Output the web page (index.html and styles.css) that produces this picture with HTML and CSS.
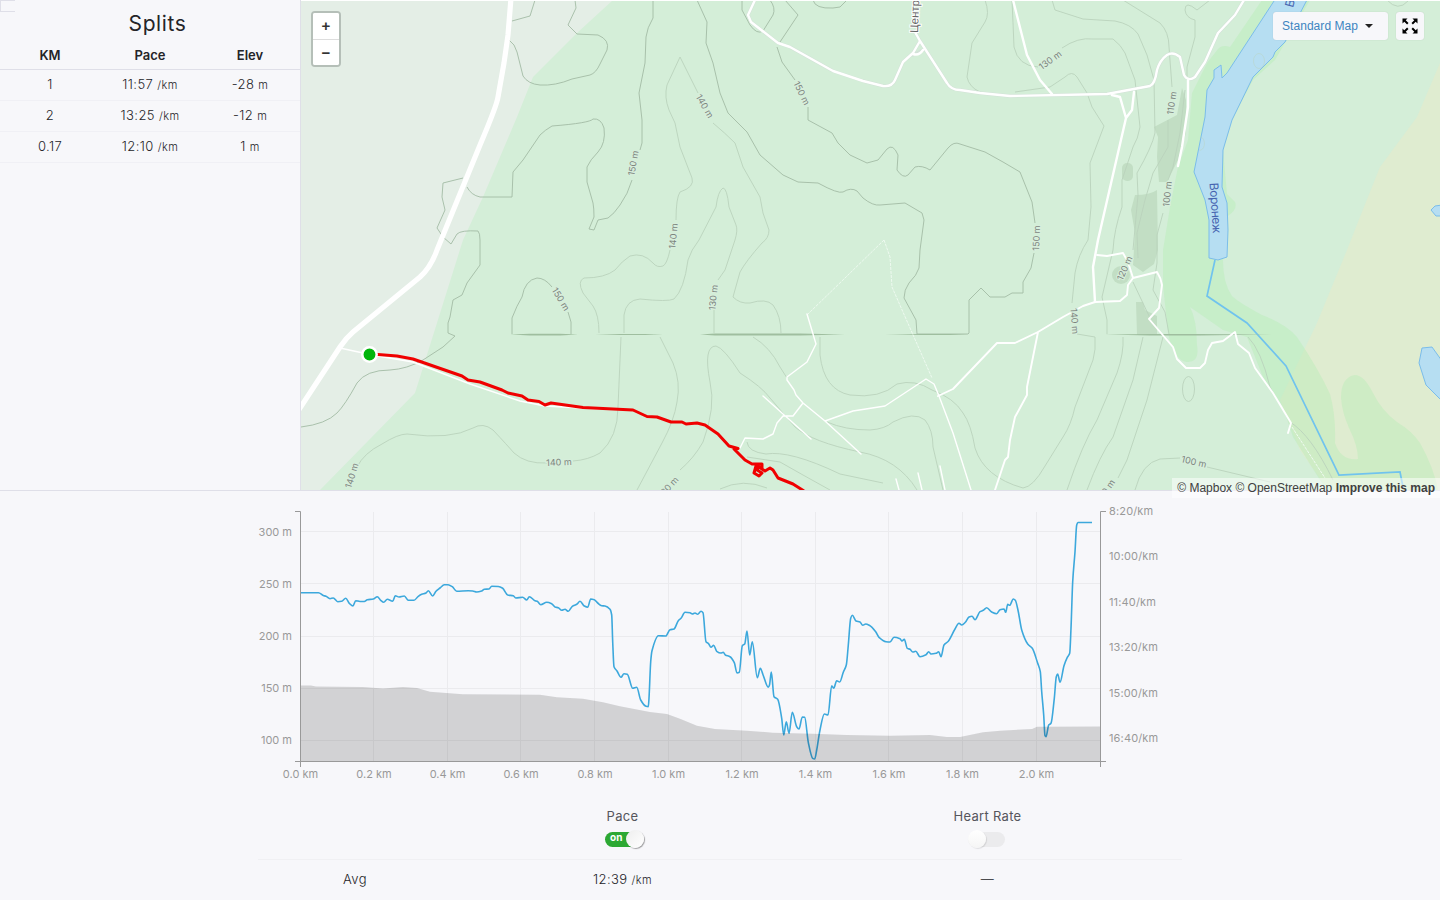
FILE: index.html
```html
<!DOCTYPE html>
<html lang="en">
<head>
    <meta charset="UTF-8">
    <title>Splits</title>
    <link rel="stylesheet" href="styles.css">
</head>
<body>
<div class="overview">
    <div class="splits">
        <span class="splits-handle"></span>
        <h2>Splits</h2>
        <table class="splits-table">
            <thead>
            <tr><th>KM</th><th>Pace</th><th>Elev</th></tr>
            </thead>
            <tbody>
            <tr><td>1</td><td>11:57 <small>/km</small></td><td>-28 <small>m</small></td></tr>
            <tr><td>2</td><td>13:25 <small>/km</small></td><td>-12 <small>m</small></td></tr>
            <tr><td>0.17</td><td>12:10 <small>/km</small></td><td>1 <small>m</small></td></tr>
            </tbody>
        </table>
    </div>
    <div class="map">
        <svg class="map-canvas" width="1139" height="489" viewBox="301 1 1139 489">
            <!-- land -->
            <rect x="301" y="1" width="1139" height="489" fill="#e4eee6"/>
            <path class="forest" d="M613 0L577 33 533 77 517 117 483 197 463 240 415 393 320 490H1440V0z"/>
            <path class="meadow" d="M1440 63L1417 117 1380 167 1360 217 1347 250 1317 323 1280 400 1300 450 1328 490H1440z"/>
            <path class="bank" d="M1262 0L1230 47Q1222 44 1218 49L1207 63 1192 93 1188 140 1178 167 1170 207 1163 250V285L1168 333Q1174 361 1187 362T1197 345Q1197 320 1190 307L1223 330 1247 337 1263 377 1283 407 1293 437 1320 480 1327 490H1438Q1434 468 1420 443 1412 431 1397 422 1382 411 1373 393 1364 375 1355 375 1341 377 1341 398 1342 412 1349 428 1358 446 1358 459 1341 461 1335 443 1336 415 1330 394 1318 368 1297 337 1286 324 1262 315 1238 302 1232 296 1223 283 1223 260L1228 216Q1238 209 1235 202L1227 194 1223 150 1232 120 1253 80 1275 60 1310 0z"/>
            <g class="wood">
                <path d="M1182 88L1186 100V133L1178 160 1167 182H1159L1157 157 1158 137 1154 127 1177 115z"/>
                <path d="M1135 195Q1150 195 1157 190L1158 250 1154 264 1143 272 1133 265 1135 233 1131 210z"/>
                <path d="M1136 302H1143L1145 310 1157 316V335H1137z"/>
                <rect x="1122" y="163" width="11" height="18" rx="5"/>
                <ellipse cx="1121" cy="275" rx="9" ry="9"/>
            </g>
            <!-- water -->
            <g class="water">
                <path d="M1276 -2L1227 73 1222 78 1221 65 1214 70V78L1207 90 1205 117 1194 172 1205 200 1209 220V258L1218 260 1227 257 1228 230 1227 203 1222 187 1223 150 1232 120 1253 77 1273 57 1275 52 1285 42 1308 -2z"/>
                <path d="M1442 205L1435 206 1431 210 1436 216H1442z"/>
                <path d="M1422 348L1432 347 1442 361V401L1426 385 1419 363z"/>
            </g>
            <path class="stream" d="M1215 260L1207 296 1247 323 1286 366 1339 475 1400 472 1403 487"/>
            <!-- contour lines -->
            <g class="contour contour-major">
                <path d="M535 0L530 16 512 21M509 40Q515 44 517 52L523 76Q528 84 540 85 555 86 572 79L590 75Q596 73 600 64L607 50Q610 40 598 35L577 34 568 25 576 8 575 0"/>
                <path d="M653 0V18Q647 28 646 37L645 63 639 93 642 120V143L640 150M632 180Q628 194 620 205 614 214 608 218L598 220 594 230 589 229 594 217Q594 208 593 203L587 182V167Q590 160 598 152 606 143 604 128 601 118 593 119 590 123 552 126 545 130 540 135L523 160 513 172 512 197H480Q471 195 467 187M463 178L443 183 442 197 445 210 437 228Q442 238 451 244L457 234Q461 230 478 231 480 233 480 240V265L467 283 462 295 453 300 450 317 448 323V333L455 336 443 347 423 360Q407 369 390 370 366 370 357 383 345 405 337 413 326 424 301 427"/>
                <path d="M697 0L707 22 706 43 713 63 720 93 728 113 747 132 760 155 783 175 798 182 818 183Q838 194 843 192 851 187 857 191L863 198Q873 206 880 205L905 203 922 213 924 220 920 250 919 268Q917 275 909 283 904 290 904 298L916 320 917 334H968L969 333V300L981 288 990 297H1005L1012 293H1023V282L1031 268 1034 253M1035 223L1032 202 1020 172 1003 162 985 152 960 144Q954 141 948 148L930 170Q922 165 915 167L908 175Q903 179 897 170L898 155Q893 143 887 149L878 160 867 163 850 155 838 143 832 133 808 120 808 107M795 80L782 62 777 47M785 0L798 15 780 42M742 0V10L750 25Q757 35 763 31L773 15Q776 8 770 0M813 0Q815 9 833 8L840 7 847 0"/>
                <path d="M512 334V318Q517 305 522 297 525 280 537 278 545 278 552 287M568 312L571 322V334"/>
            </g>
            <g class="contour">
                <path d="M698 93L680 57 667 85Q664 97 669 110L675 123 680 147 692 178Q695 187 680 192 676 198 676 220M670 250Q667 264 663 266 657 268 653 263 643 252 630 256 622 261 615 270 605 278 584 278 577 281 583 293L593 306Q599 315 599 333M713 123Q725 133 735 143L743 167 760 197 763 213 769 230Q769 238 762 243 746 261 740 272L733 297Q740 304 750 303 766 298 773 305 781 316 781 333"/>
                <path d="M735 240Q738 230 736 225L729 207Q727 188 723 188 718 191 716 207L699 240Q691 250 688 260 684 290 674 299 668 302 640 299 626 300 624 315V333M735 240L725 270 718 280M714 310V333"/>
                <path d="M621 337L618 407Q618 437 600 453 588 460 573 461M547 463Q526 464 514 453 508 446 493 430 483 422 473 428 450 440 407 434 398 434 382 444 364 453 357 467M660 337L673 363Q681 382 677 402 674 421 662 443L637 490M753 337Q770 347 780 367L787 378M680 470Q694 458 703 442 716 407 710 382 703 346 716 346 724 348 740 373 762 387 770 398L795 427Q812 442 860 452 898 459 917 490M747 442Q748 452 766 454 790 450 840 474L883 483M747 457L780 462 803 475 830 490M720 489Q743 478 767 488"/>
                <path d="M820 337V355Q824 390 850 395 880 399 897 384 915 379 932 390 954 398 963 413 971 424 975 448 984 477 1023 488 1033 487 1045 466L1063 437Q1071 425 1075 407L1093 360Q1096 350 1095 337L1077 334M827 422Q845 430 870 430 885 429 893 422 914 411 925 420 933 430 933 447L943 490"/>
                <path d="M1123 337Q1124 353 1117 373L1097 420Q1082 445 1067 490M1143 337L1133 380 1113 437Q1100 455 1087 490M1163 337L1147 400 1127 460 1118 478M1135 490Q1142 463 1160 459L1180 458M1207 467L1270 482M1248 337Q1261 350 1270 387L1290 422Q1311 435 1333 480"/>
                <path d="M985 0Q990 14 985 22L972 43 967 77Q969 87 980 92M1012 0Q1013 22 1014 47 1018 66 1038 67M1062 48Q1078 37 1093 39H1113Q1121 45 1125 53L1135 80 1140 127Q1138 139 1133 147L1122 180V207Q1114 230 1113 250L1102 297 1107 320V334M1015 92L1050 87 1065 77Q1072 70 1077 77L1087 93 1092 107 1104 126 1090 163 1091 207 1088 240Q1078 255 1075 273L1072 303M1052 0L1055 10 1083 19 1115 21Q1131 24 1138 34L1147 55 1154 80 1155 133Q1152 147 1137 173L1138 195 1133 250M1123 0L1160 23Q1169 32 1169 47L1172 87M1168 120V147L1153 173 1145 200 1137 233 1138 258M1210 0L1197 10Q1185 0 1185 10 1186 18 1195 20L1195 37 1187 67V80"/>
                <path d="M1185 90L1180 133 1173 167 1168 180M1163 213L1157 235V263L1153 290 1165 312 1169 334M1387 0Q1398 12 1408 1M1133 282L1150 318"/>
                <ellipse cx="1188.500" cy="389" rx="6" ry="12.500"/>
                <ellipse cx="1259" cy="61" rx="5.500" ry="7.500" opacity=".5"/>
                <path d="M1201 137A4 6 0 0 1 1199 150" opacity=".5"/>
            </g>
            <g class="seam">
                <path d="M510 334.500L530 333.700H560L578 334.500 560 335.500H530zM595 334.500L620 334H645L663 334.500 645 335H620zM700 334.500L715 333.500H800L845 334.500 800 335.600H715zM885 334.500L920 334H950L968 334.500 950 335H920zM1105 334.400L1150 334H1200L1278 334.500 1200 335.500H1150z"/>
            </g>
            <!-- roads -->
            <g class="road-path">
                <path d="M884 240L808 314M884 240L890 257 892 287 932 378M1292 427L1325 478"/>
            </g>
            <g class="road-case">
                <path d="M755 0L748 15 751 22 778 43 790 47 833 71 863 81 883 86Q892 87 895 80L903 62 913 53 920 41 915 32M923 50L913 55M920 41L947 83Q951 90 960 90L980 93 1010 96 1107 94 1150 86Q1155 84 1157 70 1160 60 1167 55 1173 51 1180 57L1184 75Q1188 82 1195 77L1205 62 1218 33 1235 15 1244 0"/>
            </g>
            <g class="road">
                <path class="road-wide" d="M511 -2L508 35 504 63 498 97Q497 105 480 145L437 250Q431 267 420 277L353 332Q346 338 340 347L298 411"/>
                <path class="road-mid" d="M755 0L748 15 751 22 778 43 790 47 833 71 863 81 883 86Q892 87 895 80L903 62 913 53 920 41 915 32M923 50Q919 56 913 54M920 41L947 83Q951 90 960 90L980 93 1010 96 1107 94 1150 86Q1155 84 1157 70 1160 60 1167 55 1173 51 1180 57L1184 75Q1188 82 1195 77L1205 62 1218 33 1235 15 1244 0M1013 0L1027 55 1040 80 1052 94M1188 80V107L1182 147 1178 166M1112 95L1120 97 1126 118 1132 110 1134 92M1126 118L1098 240 1093 267 1095 302"/>
                <path d="M1097 255L1107 256 1123 253 1128 262 1133 278 1128 285 1127 295 1120 301 1095 302 1083 306 1063 317 1038 332 1015 343H997L953 389 938 396M1038 332L1027 387V395L1015 417 1010 440 1008 457 1005 460 995 490M1133 278L1157 272Q1161 278 1162 285L1159 308 1149 319 1173 347 1177 359 1186 368H1200L1205 363 1208 350 1212 343 1223 341 1235 332 1238 344 1249 353 1255 368 1273 393 1291 423 1288 433"/>
                <path class="road-thin" d="M807 314L816 344 807 362 787 377V380L794 390 796 395 803 403 825 421 861 454M825 421L853 411 885 406 926 379 934 384 939 396 953 433 971 490M763 396L811 439M803 403L793 416H783L777 423 773 434 763 439 745 438 740 448M896 479L899 490M918 473L922 490M940 466L945 490M340 348L363 353M372 355L413 362 470 384 520 401 545 406 600 409"/>
            </g>
            <!-- labels -->
            <g class="contour-label">
                <text transform="translate(633 163) rotate(-80)" y="3.500">150 m</text>
                <text transform="translate(705 106) rotate(60)" y="3.500">140 m</text>
                <text transform="translate(802 93) rotate(64)" y="3.500">150 m</text>
                <text transform="translate(673 236) rotate(-85)" y="3.500">140 m</text>
                <text transform="translate(713 297.500) rotate(-84)" y="3.500">130 m</text>
                <text transform="translate(561 299) rotate(59)" y="3.500">150 m</text>
                <text transform="translate(559 462) rotate(-2)" y="3.500">140 m</text>
                <text transform="translate(351.500 475.500) rotate(-73)" y="3.500">140 m</text>
                <text transform="translate(668 487) rotate(-47)" y="3.500">130 m</text>
                <text transform="translate(1036 238) rotate(-88)" y="3.500">150 m</text>
                <text transform="translate(1075 321) rotate(86)" y="3.500">140 m</text>
                <text transform="translate(1124.500 268) rotate(-66)" y="3.500">120 m</text>
                <text transform="translate(1050 60) rotate(-36)" y="3.500">130 m</text>
                <text transform="translate(1171.500 103) rotate(-82)" y="3.500">110 m</text>
                <text transform="translate(1167 194) rotate(-84)" y="3.500">100 m</text>
                <text transform="translate(1194 461.500) rotate(13)" y="3.500">100 m</text>
                <text transform="translate(1106 490) rotate(-55)" y="3.500">110 m</text>
                <text transform="translate(871 499) rotate(-45)" y="3.500">130 m</text>
            </g>
            <text class="street-label" transform="translate(918 33) rotate(-88)">Центр</text>
            <text class="river-label" transform="translate(1209.500 183) rotate(86)">Воронеж</text>
            <text class="river-label" transform="translate(1293 8) rotate(-75)">В</text>
            <!-- activity track -->
            <path class="track" d="M373 354.300L378 354.500 397 356 413 359 462 376 468 380 480 382 502 390 508 393 522 396 528 400 539 401.500 545 405 551 403 583 407.500 633 410 647 416.500 657 417 671 422H682L686 424 697 423 705 425 718 434 729 446 738 448.500 734 449 745 460 752 464 762 464 762 468 756 466 754 473 759 476 762 473 757 470 759 467 765 471 770 468 773 470 778 478 793 484 804 491"/>
            <circle cx="369.500" cy="354.500" r="7.200" fill="#00b50b" stroke="#fff" stroke-width="2.500"/>
        </svg>
        <div class="map-zoom">
            <button type="button">+</button>
            <button type="button">−</button>
        </div>
        <div class="map-tools">
            <div class="map-style">Standard Map <span class="caret"></span></div>
            <div class="map-full">
                <svg width="16" height="16" viewBox="0 0 16 16">
                    <path class="arrow-arm" d="M2 2L5.800 5.800M14 2L10.200 5.800M2 14L5.800 10.200M14 14L10.200 10.200"/>
                    <path d="M.5.500H5.500L.5 5.500zM15.500.500H10.500L15.500 5.500zM.5 15.500H5.500L.5 10.500zM15.500 15.500H10.500L15.500 10.500z"/>
                </svg>
            </div>
        </div>
        <div class="map-credit">© Mapbox © OpenStreetMap <b>Improve this map</b></div>
    </div>
</div>

<div class="analysis">
    <svg class="chart" width="924" height="290" viewBox="258 500 924 290">
        <path class="chart-grid" d="M301 531.500H1100M301 583.500H1100M301 636.500H1100M301 688.500H1100M301 740.500H1100M373.500 512V761M447.500 512V761M520.500 512V761M594.500 512V761M668.500 512V761M741.500 512V761M815.500 512V761M888.500 512V761M962.500 512V761M1036.500 512V761"/>
        <path class="chart-pace" id="pace"/>
        <path class="chart-elev" d="M301 761V685.500H311L316 686.600 363 687 383 688.600 403 687 417 688 430 691.700 463 694.300 540 694.700 557 697.300 583 698.700 603 702.300 620 706.300 650 712 667 714 680 718.700 697 725.700 715 729 747 730.700 773 732.700 813 733.700 847 735 890 735.700 930 735 947 737H960L983 732.300 1000 730.700 1032 729 1037 726.700 1100 726.500V761z"/>
        <path class="chart-axis" d="M295 511.500H300.500V767M295 761.500H1106M1100.500 767V511.500H1106"/>
        <g class="chart-text chart-left">
            <text x="292" y="536">300 m</text>
            <text x="292" y="588">250 m</text>
            <text x="292" y="640">200 m</text>
            <text x="292" y="692">150 m</text>
            <text x="292" y="744">100 m</text>
        </g>
        <g class="chart-text chart-right">
            <text x="1109" y="515">8:20/km</text>
            <text x="1109" y="560">10:00/km</text>
            <text x="1109" y="606">11:40/km</text>
            <text x="1109" y="651">13:20/km</text>
            <text x="1109" y="697">15:00/km</text>
            <text x="1109" y="742">16:40/km</text>
        </g>
        <g class="chart-text chart-bottom">
            <text x="300.500" y="778">0.0 km</text>
            <text x="374" y="778">0.2 km</text>
            <text x="447.500" y="778">0.4 km</text>
            <text x="521" y="778">0.6 km</text>
            <text x="595" y="778">0.8 km</text>
            <text x="668.500" y="778">1.0 km</text>
            <text x="742" y="778">1.2 km</text>
            <text x="815.500" y="778">1.4 km</text>
            <text x="889" y="778">1.6 km</text>
            <text x="962.500" y="778">1.8 km</text>
            <text x="1036.500" y="778">2.0 km</text>
        </g>
    </svg>
    <div class="stats">
        <div class="stats-row stats-head">
            <div></div>
            <div>Pace<span class="toggle toggle-on"><i>on</i></span></div>
            <div>Heart Rate<span class="toggle"></span></div>
        </div>
        <div class="stats-row">
            <div>Avg</div>
            <div>12:39 <small>/km</small></div>
            <div>—</div>
        </div>
    </div>
</div>
<script src="chart.js"></script>
</body>
</html>
```
FILE: styles.css
```css
* {
    box-sizing: border-box;
}
body {
    margin: 0;
    height: 900px;
    overflow: hidden;
    background: #f7f7fa;
    color: #242428;
    font-family: Inter, "Liberation Sans", sans-serif;
    font-size: 13px;
}
small {
    font-size: 11px;
}
.overview {
    display: flex;
    height: 491px;
    border-bottom: 1px solid #dfdfe8;
}
.splits {
    position: relative;
    width: 301px;
    border-right: 1px solid #dfdfe8;
}
.splits-handle {
    position: absolute;
    top: 0;
    left: 0;
    width: 15px;
    height: 12px;
    border: 1px solid #dfdfe8;
    border-right: 0;
}
.splits h2 {
    margin: 0;
    padding: 9px 0 0 15px;
    height: 41px;
    font-size: 21px;
    line-height: 30px;
    font-weight: 400;
    letter-spacing: 0.6px;
    text-align: center;
}
.splits-table {
    width: 300px;
    table-layout: fixed;
    border-collapse: separate;
    border-spacing: 0;
    text-align: center;
}
.splits-table th {
    height: 29px;
    padding: 0;
    font-weight: 600;
    border-bottom: 1px solid #dfdfe8;
}
.splits-table td {
    height: 31px;
    padding: 0 0 2px;
    font-weight: 300;
    letter-spacing: 0.4px;
    border-bottom: 1px solid #f0f0f5;
}

/* map */
.map {
    position: relative;
    flex: 1;
    padding-top: 1px;
    background: #fff;
    font-family: "Liberation Sans", Arial, sans-serif;
}
.map-canvas {
    display: block;
}
.forest {
    fill: #d4eed8;
}
.meadow {
    fill: #dfecd0;
}
.bank {
    fill: rgba(180, 238, 180, 0.4);
}
.wood {
    fill: #c2dec4;
}
.water {
    fill: #b6def2;
    stroke: #7bbdea;
}
.stream {
    fill: none;
    stroke: #70c3ee;
    stroke-width: 1.7;
}
.contour {
    fill: none;
    stroke: #bad2bc;
    stroke-width: 0.9;
}
.contour-major {
    stroke: #a3bba5;
}
.seam {
    fill: #9fbe9f;
}
.road,
.road-case {
    fill: none;
    stroke: #fff;
    stroke-width: 1.9;
    stroke-linejoin: round;
    stroke-linecap: round;
}
.road-case {
    stroke: #d3e2d8;
    stroke-width: 3.4;
}
.road-wide {
    stroke-width: 5.2;
}
.road-mid {
    stroke-width: 2.4;
}
.road-thin {
    stroke-width: 1.4;
}
.road-path {
    fill: none;
    stroke: #eefaf0;
    stroke-dasharray: 3 1;
}
.contour-label {
    font-family: Inter, "Liberation Sans", sans-serif;
    font-size: 9px;
    fill: #7c857e;
    stroke: #d8eedc;
    stroke-width: 2px;
    paint-order: stroke;
    text-anchor: middle;
}
.street-label {
    font-size: 11.5px;
    fill: #666;
    stroke: #fff;
    stroke-width: 2px;
    paint-order: stroke;
}
.river-label {
    font-family: Inter, "Liberation Sans", sans-serif;
    font-size: 12px;
    letter-spacing: -0.4px;
    fill: #4664b0;
}
.track {
    fill: none;
    stroke: #f00000;
    stroke-width: 3;
    stroke-linejoin: round;
}
.map-zoom {
    position: absolute;
    top: 11px;
    left: 10px;
    display: flex;
    flex-direction: column;
    width: 30px;
    border: 2px solid #b5bfb8;
    border-radius: 4px;
    background: #fff;
    overflow: hidden;
}
.map-zoom button {
    height: 26px;
    padding: 0;
    border: 0;
    background: #fff;
    color: #333;
    font: bold 15px/26px "Liberation Sans", Arial, sans-serif;
}
.map-zoom button + button {
    border-top: 1px solid #ddd;
    line-height: 24px;
}
.map-tools {
    position: absolute;
    top: 12px;
    right: 16px;
    display: flex;
    gap: 8px;
}
.map-style,
.map-full {
    display: flex;
    align-items: center;
    height: 28px;
    background: #f7f7fa;
    border-radius: 3px;
    box-shadow: 0 0 1px rgba(0, 0, 0, 0.2);
}
.map-style {
    width: 115px;
    padding-left: 9px;
    color: #3d85c0;
    font-size: 12px;
    letter-spacing: 0.05px;
}
.caret {
    margin-left: 7px;
    border: 4px solid transparent;
    border-top-color: #222;
    border-bottom: 0;
}
.map-full {
    width: 28px;
    justify-content: center;
}
.arrow-arm {
    stroke: #000;
    stroke-width: 2;
}
.map-credit {
    position: absolute;
    right: 0;
    bottom: -8px;
    height: 20px;
    padding: 0 5px;
    background: rgba(255, 255, 255, 0.5);
    color: #404040;
    font-size: 12px;
    line-height: 20px;
    white-space: nowrap;
}

/* elevation / pace chart */
.analysis {
    width: 924px;
    margin: 0 auto;
    padding-top: 9px;
}
.chart {
    display: block;
}
.chart-grid {
    fill: none;
    stroke: #ebebee;
}
.chart-pace {
    fill: none;
    stroke: #3ca8dc;
    stroke-width: 1.6;
    stroke-linejoin: round;
}
.chart-elev {
    fill: rgba(0, 0, 0, 0.15);
}
.chart-axis {
    fill: none;
    stroke: #999;
}
.chart-text {
    font-size: 11px;
    fill: #999;
}
.chart-right {
    letter-spacing: 0.15px;
}
.chart-left {
    text-anchor: end;
}
.chart-bottom {
    text-anchor: middle;
}

/* averages */
.stats-row {
    display: grid;
    grid-template-columns: 194px 341px 389px;
    height: 40px;
    line-height: 38px;
    text-align: center;
    font-weight: 300;
    letter-spacing: 0.4px;
}
.stats-head {
    height: 70px;
    padding-top: 17px;
    line-height: 19px;
    font-weight: 400;
    letter-spacing: 0.3px;
    color: #55555c;
    border-bottom: 1px solid #f0f0f3;
}
.toggle {
    position: relative;
    display: block;
    width: 37px;
    height: 15px;
    margin: 6px auto 0 175px;
    border-radius: 8px;
    background: #ebebed;
}
.toggle::after {
    content: '';
    position: absolute;
    top: -2px;
    left: 0;
    width: 18px;
    height: 18px;
    border-radius: 50%;
    background: linear-gradient(#fff, #f5f5f5);
    box-shadow: 1px 1px 1px rgba(0, 0, 0, 0.1);
}
.toggle-on {
    width: 38px;
    margin-left: 153px;
    background: #2ca833;
}
.toggle-on::after {
    left: 21px;
    background: linear-gradient(135deg, #eee, #fff);
    box-shadow: 1px 1px 1px rgba(0, 0, 0, 0.35);
}
.toggle i {
    position: absolute;
    top: 0;
    left: 5px;
    color: #fff;
    font-style: normal;
    font-weight: 700;
    font-size: 10px;
    line-height: 11px;
    letter-spacing: 0;
}
```
FILE: chart.js
```js
// x y pairs of the pace line, in chart units
var pace = "301 592.7 318.5 592.7 323.3 595.5 326 596.3 330 598.7 333.3 598 337.7 601.7 341.7 601.3 345.7 598.3 349.3 603.3 353 606 355.7 600.7 360 601.5 364.3 601.5 367.3 599.7 373.3 599 377.3 596.7 380.7 600.3 383.7 602.3 387.3 599.3 392.7 601.3 395.3 595.7 399 597 404.3 596 408.3 600.3 414 600.3 418.3 596.3 421.7 594.3 426 593 428.3 590.7 432.7 596 436 591.3 440 588 444.3 584.7 448 584.7 452.3 586.7 456.7 591.3 468.3 590.7 472.7 591 476.7 592 481.7 591 484.3 589.3 489 589 491.7 586.3 498.3 586.5 502.7 588.3 507.7 595 513.3 595.7 515.7 598 522.7 597.3 526.7 600 529.3 596.7 535 600.7 537.3 601.3 540.7 604.7 546.7 602.3 551.7 603.7 555 607 558.3 607.7 561.7 610.3 565 609.3 568.3 611.3 572.3 606.3 576.7 604.3 580 601.3 584.3 606 587.7 607.3 590.7 599 594.3 599.7 597.7 603 601.7 605.7 605 606 610 609.3 611.7 615 612.7 641.7 614 666.7 617 671 621 677.3 624 673.7 627.3 674.3 632.7 688.3 636.7 687.3 640.7 700 646 706.3 648.3 706.7 649 698.3 650.7 661.7 652 650.7 658.3 635.7 665.7 636 670 629.7 674 629 678.3 620.7 681 618.3 685 612.3 690 612.7 692.3 614 695 613 697.7 614.3 701 611.3 703 612.7 706 641.7 708.3 643.3 711 647.3 713.7 645.3 716.7 651.3 720.7 653 723.3 652.3 725.3 655 730 656.7 734.3 662.7 737 673 739.3 672.3 742.3 645.7 744.7 644 747 631 749.7 655 752.3 641.7 757.3 677.7 760.3 668.3 763 674.7 768.3 687.3 769.5 685 771.3 672 774 696.7 777.7 699.3 781.7 718.3 783.7 735 786.3 721.7 789 733.3 792.3 712.3 796.7 726.7 799 729 802.3 717 804.7 717.3 808.3 742.3 812.7 758.3 814.7 759 816.7 750 820 730 824.3 714 828 715 831.7 685.7 833.7 688.3 836.7 680.7 839.7 682 843.3 672.3 846.3 665 848.3 645 850.7 618.3 852.3 615.3 856 621 860 622 862.7 625.3 865.7 624 869.3 625.3 875.7 631.7 879 637.3 886 641.7 890 642 894 637.3 900 638.7 902 641 904.3 639.3 907.3 648.3 910 649.3 912.7 652 915.7 651.3 920 656.7 926 654.7 928.7 651.7 931 654 936 653.3 938.7 651.7 941 656.7 944 645 948.3 641.3 955 629 959 623.3 961.7 625 965.3 622.3 969 617 972 616.3 975 619.7 980 611.7 983.3 610.3 986.7 607.7 991.7 612 996.7 613.7 1000 609.7 1004 609 1005.7 612.3 1007.7 604.3 1009.7 605.3 1013.3 599 1015.3 600.3 1018.3 611.7 1021.7 630 1027.7 644 1032.3 648.3 1037.7 663.3 1040.3 671.7 1041.7 691.7 1043.7 715 1045 735.7 1046 736.7 1048.7 725 1051 723.3 1054.3 698.3 1056.3 676.7 1057.7 674 1060 682.3 1064 665.7 1067.3 657.3 1069.7 653.3 1071 628.3 1072.7 581.7 1075 551.7 1076.7 525 1078 522.5 1092 522.5".split(" ").map(Number)

var pts = []
for (var i = 0; i < pace.length; i += 2) {
    pts.push([pace[i], pace[i + 1]])
}

// slope at point i, flat on peaks and valleys
function slope(i) {
    if (i === 0 || i === pts.length - 1) return 0
    var a = (pts[i][1] - pts[i - 1][1]) / (pts[i][0] - pts[i - 1][0]),
        b = (pts[i + 1][1] - pts[i][1]) / (pts[i + 1][0] - pts[i][0])
    return a * b <= 0 ? 0 : 2 * a * b / (a + b)
}

var d = "M" + pts[0]
for (i = 1; i < pts.length; i++) {
    var p = pts[i - 1],
        q = pts[i],
        w = (q[0] - p[0]) / 3
    d += "C" + [p[0] + w, p[1] + w * slope(i - 1), q[0] - w, q[1] - w * slope(i), q[0], q[1]].join(" ")
}
document.getElementById("pace").setAttribute("d", d)
```
